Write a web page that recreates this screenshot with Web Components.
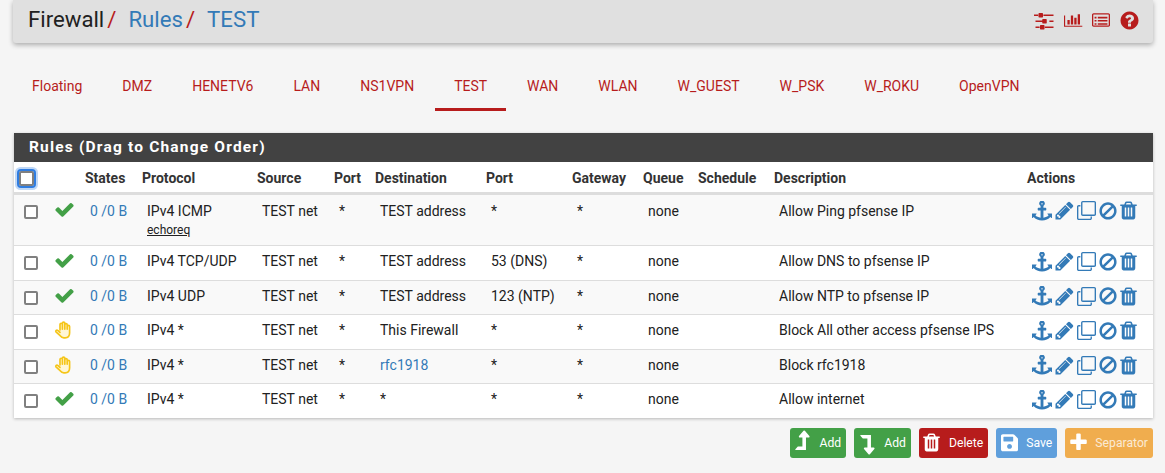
<!DOCTYPE html>
<html>
<head>
<meta charset="utf-8">
<title>Firewall: Rules: TEST</title>
<style>
  html, body { margin: 0; background: #f5f5f5; }
  body { font: 14px/20px Roboto, "Liberation Sans", sans-serif; color: #212121; width: 1165px; height: 473px; overflow: hidden; }
  a { color: #337ab7; text-decoration: none; }
</style>
</head>
<body>
<fw-page>
  <fw-header>
    <span>Firewall</span><a href="#">Rules</a><a href="#">TEST</a>
    <fw-icon slot="tools" name="sliders" size="21"></fw-icon>
    <fw-icon slot="tools" name="chart" size="16"></fw-icon>
    <fw-icon slot="tools" name="list" size="18"></fw-icon>
    <fw-icon slot="tools" name="question" size="21"></fw-icon>
  </fw-header>
  <fw-tabs>
    <fw-tab>Floating</fw-tab><fw-tab>DMZ</fw-tab><fw-tab>HENETV6</fw-tab><fw-tab>LAN</fw-tab><fw-tab>NS1VPN</fw-tab><fw-tab active>TEST</fw-tab><fw-tab>WAN</fw-tab><fw-tab>WLAN</fw-tab><fw-tab>W_GUEST</fw-tab><fw-tab>W_PSK</fw-tab><fw-tab>W_ROKU</fw-tab><fw-tab>OpenVPN</fw-tab>
  </fw-tabs>
  <fw-panel heading="Rules (Drag to Change Order)">
    <fw-row head>
      <b>States</b><b>Protocol</b><b>Source</b><b>Port</b><b>Destination</b><b>Port</b><b>Gateway</b><b>Queue</b><b>Schedule</b><b>Description</b><b>Actions</b>
    </fw-row>
    <fw-row status="pass" striped tall>
      <a href="#">0 /0 B</a><span>IPv4 ICMP<fw-subtype>echoreq</fw-subtype></span><span>TEST net</span><span>*</span><span>TEST address</span><span>*</span><span>*</span><span>none</span><span></span><span>Allow Ping pfsense IP</span><fw-actions></fw-actions>
    </fw-row>
    <fw-row status="pass">
      <a href="#">0 /0 B</a><span>IPv4 TCP/UDP</span><span>TEST net</span><span>*</span><span>TEST address</span><span>53 (DNS)</span><span>*</span><span>none</span><span></span><span>Allow DNS to pfsense IP</span><fw-actions></fw-actions>
    </fw-row>
    <fw-row status="pass" striped>
      <a href="#">0 /0 B</a><span>IPv4 UDP</span><span>TEST net</span><span>*</span><span>TEST address</span><span>123 (NTP)</span><span>*</span><span>none</span><span></span><span>Allow NTP to pfsense IP</span><fw-actions></fw-actions>
    </fw-row>
    <fw-row status="block">
      <a href="#">0 /0 B</a><span>IPv4 *</span><span>TEST net</span><span>*</span><span>This Firewall</span><span>*</span><span>*</span><span>none</span><span></span><span>Block All other access pfsense IPS</span><fw-actions></fw-actions>
    </fw-row>
    <fw-row status="block" striped>
      <a href="#">0 /0 B</a><span>IPv4 *</span><span>TEST net</span><span>*</span><a href="#">rfc1918</a><span>*</span><span>*</span><span>none</span><span></span><span>Block rfc1918</span><fw-actions></fw-actions>
    </fw-row>
    <fw-row status="pass">
      <a href="#">0 /0 B</a><span>IPv4 *</span><span>TEST net</span><span>*</span><span>*</span><span>*</span><span>*</span><span>none</span><span></span><span>Allow internet</span><fw-actions></fw-actions>
    </fw-row>
  </fw-panel>
  <fw-buttons>
    <fw-button icon="levelup" size="25" color="#43a047">Add</fw-button>
    <fw-button icon="leveldown" size="25" color="#43a047">Add</fw-button>
    <fw-button icon="trash" size="21" color="#b71c1c">Delete</fw-button>
    <fw-button icon="save" size="19.5" color="#5f9fdc">Save</fw-button>
    <fw-button icon="plus" size="21" color="#f0ad4e" muted>Separator</fw-button>
  </fw-buttons>
</fw-page>

<script>
const ICONS = {
  sliders: [1792, 'M480 1408v128h-352v-128h352zm352-128q26 0 45 19t19 45v256q0 26-19 45t-45 19h-256q-26 0-45-19t-19-45v-256q0-26 19-45t45-19h256zm160-384v128h-864v-128h864zm-640-512v128h-352v-128h352zm1312 1024v128h-736v-128h736zm-960-1152q26 0 45 19t19 45v256q0 26-19 45t-45 19h-256q-26 0-45-19t-19-45v-256q0-26 19-45t45-19h256zm320 512q26 0 45 19t19 45v256q0 26-19 45t-45 19h-256q-26 0-45-19t-19-45v-256q0-26 19-45t45-19h256zm640 128v128h-352v-128h352zm0-512v128h-864v-128h864z'],
  chart: [2048, 'M640 896v512h-256v-512h256zm384-512v1024h-256v-1024h256zm1024 1152v128h-2048v-1280h128v1152h1920zm-640-896v768h-256v-768h256zm384-384v1152h-256v-1152h256z'],
  list: [1792, 'M160 224h1472q66 0 113 47t47 113v1024q0 66-47 113t-113 47h-1472q-66 0-113-47t-47-113v-1024q0-66 47-113t113-47zm0 128q-32 0-32 32v1024q0 32 32 32h1472q32 0 32-32v-1024q0-32-32-32zm96 224h192v160h-192zm320 0h960v160h-960zm-320 320h192v160h-192zm320 0h960v160h-960zm-320 320h192v160h-192zm320 0h960v160h-960z'],
  question: [1792, 'M1024 1376v-192q0-14-9-23t-23-9h-192q-14 0-23 9t-9 23v192q0 14 9 23t23 9h192q14 0 23-9t9-23zm256-672q0-88-55.5-163t-138.5-116-170-41q-243 0-371 213-15 24 8 42l132 100q7 6 19 6 16 0 25-12 53-68 86-92 34-24 86-24 48 0 85.5 26t37.5 59q0 38-20 61t-68 45q-63 28-115.5 86.5t-52.5 125.5v36q0 14 9 23t23 9h192q14 0 23-9t9-23q0-19 21.5-49.5t54.5-49.5q32-18 49-28.5t46-35 44.5-48 28-60.5 12.5-81zm384 192q0 209-103 385.5t-279.5 279.5-385.5 103-385.5-103-279.5-279.5-103-385.5 103-385.5 279.5-279.5 385.5-103 385.5 103 279.5 279.5 103 385.5z'],
  check: [1792, 'M1671 566q0 40-28 68l-724 724-136 136q-28 28-68 28t-68-28l-136-136-362-362q-28-28-28-68t28-68l136-136q28-28 68-28t68 28l294 295 656-657q28-28 68-28t68 28l136 136q28 28 28 68z'],
  anchor: [1792, 'M960 256q0-26-19-45t-45-19-45 19-19 45 19 45 45 19 45-19 19-45zm832 888v352q0 22-20 30-8 2-12 2-12 0-23-9l-93-93q-119 143-318.5 226.5t-429.5 83.5-429.5-83.5-318.5-226.5l-93 93q-9 9-23 9-4 0-12-2-20-8-20-30v-352q0-14 9-23t23-9h352q22 0 30 20 8 19-7 35l-100 100q67 91 189.5 153.5t271.5 82.5v-647h-192q-26 0-45-19t-19-45v-128q0-26 19-45t45-19h192v-163q-58-34-93-92.5t-35-128.5q0-106 75-181t181-75 181 75 75 181q0 70-35 128.5t-93 92.5v163h192q26 0 45 19t19 45v128q0 26-19 45t-45 19h-192v647q149-20 271.5-82.5t189.5-153.5l-100-100q-15-16-7-35 8-20 30-20h352q14 0 23 9t9 23z'],
  pencil: [1792, 'M491 1536l91-91-235-235-91 91v107h128v128h107zm523-928q0-22-22-22-10 0-17 7l-542 542q-7 7-7 17 0 22 22 22 10 0 17-7l542-542q7-7 7-17zm-54-192l416 416-832 832h-416v-416zm683 96q0 53-37 90l-166 166-416-416 166-165q36-38 90-38 53 0 91 38l235 234q37 39 37 91z'],
  clone: [1792, 'M1664 1632v-1088q0-13-9.5-22.5t-22.5-9.5h-1088q-13 0-22.5 9.5t-9.5 22.5v1088q0 13 9.5 22.5t22.5 9.5h1088q13 0 22.5-9.5t9.5-22.5zm128-1088v1088q0 66-47 113t-113 47h-1088q-66 0-113-47t-47-113v-1088q0-66 47-113t113-47h1088q66 0 113 47t47 113zm-384-384v160h-128v-160q0-13-9.5-22.5t-22.5-9.5h-1088q-13 0-22.5 9.5t-9.5 22.5v1088q0 13 9.5 22.5t22.5 9.5h160v128h-160q-66 0-113-47t-47-113v-1088q0-66 47-113t113-47h1088q66 0 113 47t47 113z', 'flipy'],
  ban: [1792, 'M1440 893q0-161-87-295l-754 753q137 89 297 89 111 0 211.5-43.5t173.5-116.5 116-174.5 43-212.5zm-999 299l755-754q-135-91-300-91-148 0-273 73t-198 199-73 274q0 162 89 299zm1223-299q0 157-61 300t-163.5 246-245 164-298.5 61-298.5-61-245-164-163.5-246-61-300 61-299.5 163.5-245.5 245-164 298.5-61 298.5 61 245 164 163.5 245.5 61 299.5z'],
  trash: [1792, 'M704 1376v-704q0-14-9-23t-23-9h-64q-14 0-23 9t-9 23v704q0 14 9 23t23 9h64q14 0 23-9t9-23zm256 0v-704q0-14-9-23t-23-9h-64q-14 0-23 9t-9 23v704q0 14 9 23t23 9h64q14 0 23-9t9-23zm256 0v-704q0-14-9-23t-23-9h-64q-14 0-23 9t-9 23v704q0 14 9 23t23 9h64q14 0 23-9t9-23zm-544-992h448l-48-117q-7-9-17-11h-317q-10 2-17 11zm928 32v64q0 14-9 23t-23 9h-96v948q0 83-47 143.5t-113 60.5h-832q-66 0-113-58.5t-47-141.5v-952h-96q-14 0-23-9t-9-23v-64q0-14 9-23t23-9h309l70-167q15-37 54-63t79-26h320q40 0 79 26t54 63l70 167h309q14 0 23 9t9 23z'],
  levelup: [1792, 'M1395 508q-17 36-58 36h-192v864q0 14-9 23t-23 9h-704q-21 0-29-18-8-20 4-35l160-192q9-11 25-11h320v-640h-192q-40 0-58-37-17-37 9-68l320-384q18-22 49-22t49 22l320 384q27 32 9 69z'],
  leveldown: [1792, 'M1395 508q-17 36-58 36h-192v864q0 14-9 23t-23 9h-704q-21 0-29-18-8-20 4-35l160-192q9-11 25-11h320v-640h-192q-40 0-58-37-17-37 9-68l320-384q18-22 49-22t49 22l320 384q27 32 9 69z', 'flipy'],
  save: [448, 'M433.941 129.941l-83.882-83.882A48 48 0 0 0 316.118 32H48C21.49 32 0 53.49 0 80v352c0 26.51 21.49 48 48 48h352c26.51 0 48-21.49 48-48V163.882a48 48 0 0 0-14.059-33.941zM224 416c-35.346 0-64-28.654-64-64 0-35.346 28.654-64 64-64s64 28.654 64 64c0 35.346-28.654 64-64 64zm96-304.52V212c0 6.627-5.373 12-12 12H76c-6.627 0-12-5.373-12-12V108c0-6.627 5.373-12 12-12h228.52c3.183 0 6.235 1.264 8.485 3.515l3.48 3.48A11.996 11.996 0 0 1 320 111.48z', 'tall'],
  plus: [1792, 'M1600 736v192q0 40-28 68t-68 28h-416v416q0 40-28 68t-68 28h-192q-40 0-68-28t-28-68v-416h-416q-40 0-68-28t-28-68v-192q0-40 28-68t68-28h416v-416q0-40 28-68t68-28h192q40 0 68 28t28 68v416h416q40 0 68 28t28 68z']
};

const HAND = `<svg viewBox="0 0 24 24" width="100%" height="100%" fill="#fff6d5" stroke="currentColor" stroke-width="2.2" stroke-linejoin="round" stroke-linecap="round"><path d="M8 12V4.6a1.6 1.6 0 0 1 3.2 0V3a1.6 1.6 0 0 1 3.2 0v2a1.6 1.6 0 0 1 3.2 0v2.4a1.6 1.6 0 0 1 3.2 0V16c0 4-2.4 6.4-6 6.4h-1.6c-2.6 0-3.6-.9-5-2.8L2.6 14.4c-1-1.5 1-3.1 2.4-1.8L8 15.2M11.2 4.6V11M14.4 5v6M17.6 7.4V11"/></svg>`;

const define = (name, css, html, extra) => {
  customElements.define(name, class extends HTMLElement {
    constructor() {
      super();
      this.attachShadow({mode: 'open'});
      this.shadowRoot.innerHTML = `<style>${css}</style>${typeof html === 'function' ? html(this) : html}`;
      if (extra) extra(this);
    }
  });
};

customElements.define('fw-icon', class extends HTMLElement {
  static get observedAttributes() { return ['name', 'size']; }
  constructor() {
    super();
    this.attachShadow({mode: 'open'});
  }
  connectedCallback() { this.draw(); }
  attributeChangedCallback() { this.draw(); }
  draw() {
    const [w, d, mode] = ICONS[this.getAttribute('name')] || [1792, ''];
    const size = this.getAttribute('size') || 20;
    const h = mode === 'tall' ? 512 : 1792;
    const flip = mode === 'flipy' ? `transform="translate(0 1792) scale(1 -1)"` : '';
    this.shadowRoot.innerHTML = `<style>:host{display:inline-flex;line-height:0}svg{display:block;fill:currentColor}</style>
      <svg viewBox="0 0 ${w} ${h}" width="${size * w / h}" height="${size}"><path ${flip} d="${d}"/></svg>`;
  }
});

define('fw-page', `:host{display:block;padding:0 12px 0 14px}`, `<slot></slot>`);

define('fw-header', `
  :host{display:flex;align-items:center;height:43px;margin-left:-1px;padding:0 13.5px 0 15px;background:#e0e0e0;box-shadow:0 2px 5px rgba(0,0,0,.3);border-radius:0 0 3px 3px;color:#212121;font-size:22.2px;line-height:40px;box-sizing:border-box}
  .crumbs{display:flex;flex:1;padding-bottom:5px}
  .crumbs slot::slotted(a){margin-left:12px}
  .crumbs slot::slotted(span)::after,.crumbs slot::slotted(a:first-of-type)::after{content:"/";color:#b71c1c;margin-left:3px}
  .tools{display:flex;align-items:center;gap:9px;color:#b71c1c;padding-bottom:3px}
`, `<div class="crumbs"><slot></slot></div><div class="tools"><slot name="tools"></slot></div>`);

define('fw-tabs', `:host{display:flex;gap:2px;margin:22px 0 22px -1px}`, `<slot></slot>`);
define('fw-tab', `
  :host{display:block;height:46px;padding:0 19px;box-sizing:border-box;line-height:42px;color:#b71c1c;font-size:14px}
  :host([active]){border-bottom:3px solid #b71c1c}
`, `<slot></slot>`);

define('fw-panel', `
  :host{display:block;background:#fff;box-shadow:0 1px 3px rgba(0,0,0,.25)}
  h2{margin:0;height:29px;padding:0 15px;background:#424242;color:#fff;font-size:15.5px;font-weight:700;letter-spacing:1.18px;line-height:29px;white-space:nowrap}
`, el => `<h2>${el.getAttribute('heading')}</h2><slot></slot>`);

define('fw-row', `
  :host{--cell:5px;--top:5px;display:grid;grid-template-columns:38px 33px 57px 115px 77px 41px 111px 86px 71px 55px 76px 253px 126px;min-height:34.6px;box-sizing:border-box;border-top:1px solid #ddd;background:#fff;color:#212121}
  :host([striped]){background:#f9f9f9}
  :host([tall]){--top:6px}
  :host([head]){--cell:0px;--top:6px;height:32px;min-height:0;border-top:0;border-bottom:2px solid #ddd;color:#333}
  ::slotted(*){padding:var(--top) 0 6px var(--cell);min-width:0;white-space:nowrap}
  .box{padding:10px 0 0 10px}
  input{appearance:none;-webkit-appearance:none;display:block;width:14px;height:14px;margin:0;box-sizing:border-box;border:2px solid #808080;border-radius:2px;background:#fff}
  :host([head]) .box{padding:9px 0 0 5px}
  :host([head]) input{width:15px;height:15px;outline:2px solid #2f7de1;outline-offset:0;box-shadow:0 0 0 4px rgba(47,125,225,.3)}
  .status{padding:4px 0 0 2px;line-height:0}
  .pass{color:#43a047}
  .block{color:#f5c518;width:18px;height:18px;display:block;margin:2px 0 0 0}
`, el => {
  const status = el.getAttribute('status');
  const mark = status === 'pass' ? `<fw-icon class="pass" name="check" size="21"></fw-icon>`
    : status === 'block' ? `<span class="block">${HAND}</span>` : '';
  return `<div class="box"><input type="checkbox" aria-label="select"></div><div class="status">${mark}</div><slot></slot>`;
});

define('fw-subtype', `:host{display:block;font-size:12px;line-height:16px;text-decoration:underline;margin-top:1px;padding-bottom:1px;color:#212121}`, `<slot></slot>`);

define('fw-actions', `
  :host{display:flex;align-items:center;align-self:start;gap:2px;color:#337ab7;padding-top:5px!important}
  .trash{margin-left:-2.5px}
`, `<fw-icon name="anchor" size="20"></fw-icon><fw-icon name="pencil" size="21"></fw-icon><fw-icon name="clone" size="19"></fw-icon><fw-icon name="ban" size="20"></fw-icon><fw-icon class="trash" name="trash" size="21"></fw-icon>`);

define('fw-buttons', `:host{display:flex;justify-content:flex-end;gap:8px;margin-top:10px}`, `<slot></slot>`);
define('fw-button', `
  :host{display:inline-flex;align-items:center;height:30px;box-sizing:border-box;padding:0 5px 0 0;border-radius:3px;color:#fff;font-size:12.2px;background:var(--bg);font-weight:400}
  :host([muted]) span{opacity:.75}
  .ico{display:flex;justify-content:center;width:26px;margin-right:4px}
`, el => `<div class="ico"><fw-icon name="${el.getAttribute('icon')}" size="${el.getAttribute('size')}"></fw-icon></div><span><slot></slot></span>`, el => {
  el.style.setProperty('--bg', el.getAttribute('color'));
});
</script>
</body>
</html>
